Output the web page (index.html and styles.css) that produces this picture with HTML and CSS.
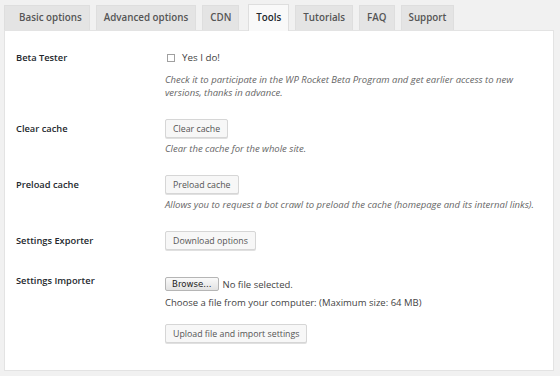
FILE: index.html
```html
<!DOCTYPE html>
<html lang="en">
<head>
    <meta charset="UTF-8">
    <meta name="viewport" content="width=device-width, initial-scale=1.0">
    <title>WP Rocket - Tools</title>
    <link rel="stylesheet" href="styles.css">
</head>
<body>
    <div class="tabs">
        <a class="tab first">Basic options</a>
        <a class="tab">Advanced options</a>
        <a class="tab">CDN</a>
        <a class="tab active">Tools</a>
        <a class="tab">Tutorials</a>
        <a class="tab">FAQ</a>
        <a class="tab">Support</a>
    </div>
    <div class="panel">
        <div class="row row-beta">
            <div class="label">Beta Tester</div>
            <div class="field">
                <label class="check"><span class="box"></span>Yes I do!</label>
                <p class="desc">Check it to participate in the WP Rocket Beta Program and get earlier access to new versions, thanks in advance.</p>
            </div>
        </div>
        <div class="row">
            <div class="label">Clear cache</div>
            <div class="field">
                <button class="btn">Clear cache</button>
                <p class="desc">Clear the cache for the whole site.</p>
            </div>
        </div>
        <div class="row">
            <div class="label">Preload cache</div>
            <div class="field">
                <button class="btn">Preload cache</button>
                <p class="desc">Allows you to request a bot crawl to preload the cache (homepage and its internal links).</p>
            </div>
        </div>
        <div class="row">
            <div class="label">Settings Exporter</div>
            <div class="field">
                <button class="btn">Download options</button>
            </div>
        </div>
        <div class="row row-import">
            <div class="label">Settings Importer</div>
            <div class="field">
                <div class="file-line">
                    <button class="browse">Browse...</button>
                    <span class="file-name">No file selected.</span>
                </div>
                <p class="hint">Choose a file from your computer: (Maximum size: 64 MB)</p>
                <button class="btn upload">Upload file and import settings</button>
            </div>
        </div>
    </div>
</body>
</html>
```

FILE: styles.css
```css
body {
    margin: 0;
    padding: 4px 4px 0 4px;
    background-color: #f1f1f1;
    font-family: "Open Sans", "Liberation Sans", sans-serif;
    color: #444;
}
.tabs {
    display: flex;
    align-items: flex-end;
    gap: 6px;
    height: 26px;
}
.tab {
    height: 24px;
    line-height: 24px;
    padding: 0 7px;
    background: #e4e4e4;
    border: 1px solid #dedede;
    border-bottom: none;
    font-size: 9.8px;
    font-weight: 600;
    color: #555;
}
.tab.first {
    padding-left: 14px;
}
.tab.active {
    height: 26px;
    line-height: 26px;
    background: #f9f9f9;
    color: #23282d;
    margin-bottom: -1px;
    margin-left: 3px;
    position: relative;
}
.panel {
    background: #fff;
    border: 1px solid #e3e3e3;
    width: 550px;
    height: 341px;
    padding-top: 7px;
    box-sizing: border-box;
}
.row {
    display: flex;
    padding: 10px 0;
}
.row-import {
    padding-top: 14px;
}
.label {
    width: 160px;
    flex-shrink: 0;
    padding-left: 11px;
    box-sizing: border-box;
    font-size: 9.3px;
    font-weight: 600;
    color: #23282d;
    line-height: 13px;
    padding-top: 3px;
}
.row-import .label {
    padding-top: 0;
}
.field {
    flex: 1;
    font-size: 9.5px;
}
.check {
    display: flex;
    align-items: center;
    height: 19px;
    font-size: 9.8px;
    color: #444;
}
.box {
    width: 6px;
    height: 6px;
    border: 1px solid #a0a0a0;
    margin: 0 7px 0 2px;
}
.desc {
    margin: 4px 0 0;
    font-style: italic;
    color: #666;
    line-height: 13px;
    width: 370px;
}
.row-beta .desc {
    margin-top: 6px;
}
.btn {
    height: 19px;
    padding: 0 7px;
    background: #f7f7f7;
    border: 1px solid #d6d6d6;
    border-radius: 2px;
    box-shadow: 0 1px 0 #e0e0e0;
    font-family: inherit;
    font-size: 8.8px;
    color: #555;
    display: block;
}
.file-line {
    display: flex;
    align-items: center;
    height: 20px;
}
.browse {
    height: 14px;
    padding: 0 6px;
    background: linear-gradient(#fafafa, #e2e2e2);
    border: 1px solid #b5b5b5;
    border-radius: 2px;
    font-family: "DejaVu Sans", sans-serif;
    font-size: 8.6px;
    color: #222;
    margin-right: 4px;
}
.file-name {
    color: #444;
}
.hint {
    margin: 2px 0 0;
    line-height: 13px;
    color: #444;
}
.upload {
    margin-top: 15px;
}
```
